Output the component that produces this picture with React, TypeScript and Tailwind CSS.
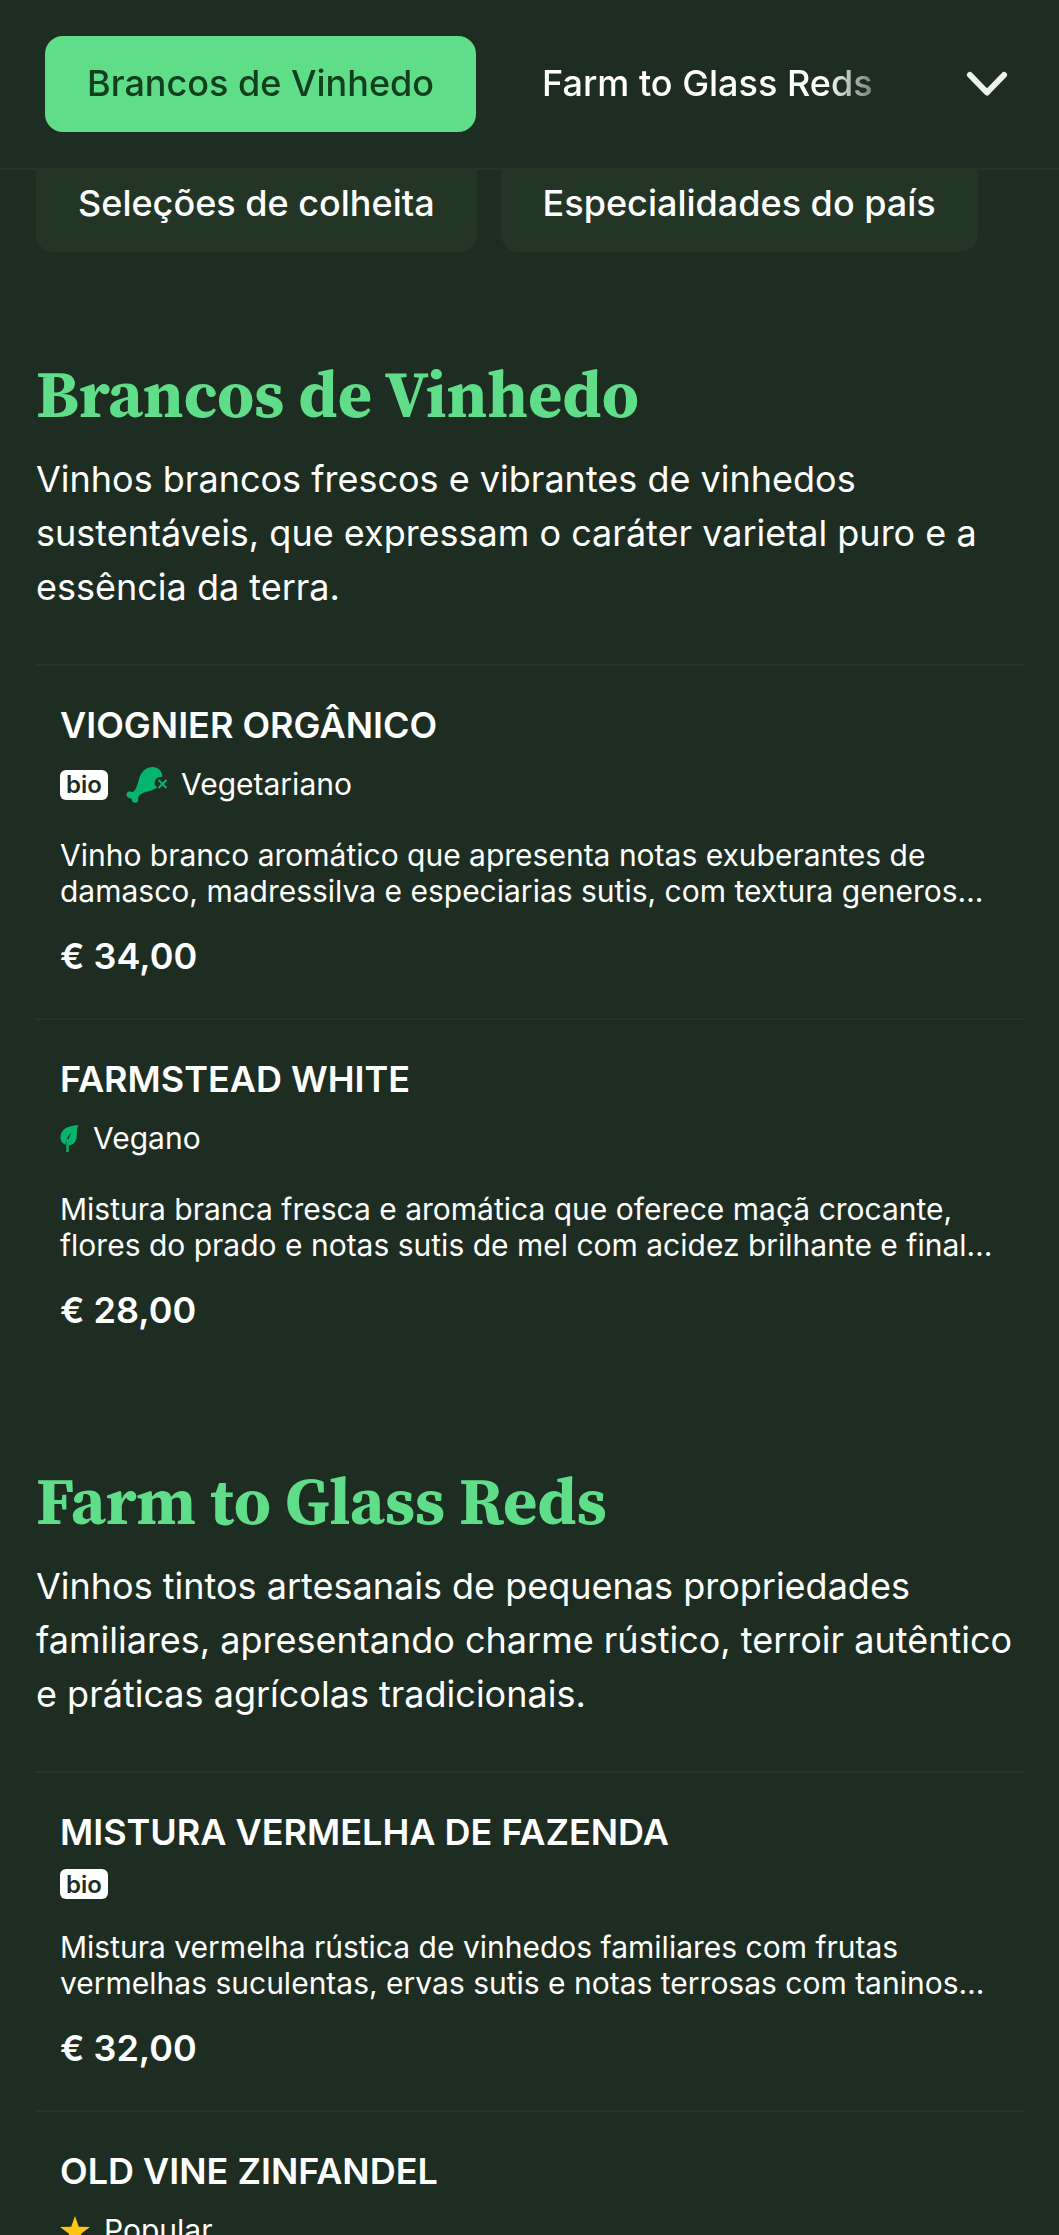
import type { ReactNode } from 'react';

interface Tag {
  kind: 'bio' | 'vegetarian' | 'vegan' | 'popular';
  label?: string;
}

interface Wine {
  name: string;
  tags: Tag[];
  description: string;
  price: string;
}

interface Category {
  id: string;
  title: string;
  description: string;
  wines: Wine[];
}

const categories: Category[] = [
  {
    id: 'brancos-de-vinhedo',
    title: 'Brancos de Vinhedo',
    description:
      'Vinhos brancos frescos e vibrantes de vinhedos sustentáveis, que expressam o caráter varietal puro e a essência da terra.',
    wines: [
      {
        name: 'VIOGNIER ORGÂNICO',
        tags: [{ kind: 'bio' }, { kind: 'vegetarian', label: 'Vegetariano' }],
        description:
          'Vinho branco aromático que apresenta notas exuberantes de damasco, madressilva e especiarias sutis, com textura generos…',
        price: '€ 34,00',
      },
      {
        name: 'FARMSTEAD WHITE',
        tags: [{ kind: 'vegan', label: 'Vegano' }],
        description:
          'Mistura branca fresca e aromática que oferece maçã crocante, flores do prado e notas sutis de mel com acidez brilhante e final…',
        price: '€ 28,00',
      },
    ],
  },
  {
    id: 'farm-to-glass-reds',
    title: 'Farm to Glass Reds',
    description:
      'Vinhos tintos artesanais de pequenas propriedades familiares, apresentando charme rústico, terroir autêntico e práticas agrícolas tradicionais.',
    wines: [
      {
        name: 'MISTURA VERMELHA DE FAZENDA',
        tags: [{ kind: 'bio' }],
        description:
          'Mistura vermelha rústica de vinhedos familiares com frutas vermelhas suculentas, ervas sutis e notas terrosas com taninos…',
        price: '€ 32,00',
      },
      {
        name: 'OLD VINE ZINFANDEL',
        tags: [{ kind: 'popular', label: 'Popular' }],
        description: '',
        price: '',
      },
    ],
  },
];

function DrumstickIcon() {
  return (
    <svg width="41" height="36" viewBox="0 0 41 36" fill="none" aria-hidden="true">
      <path
        d="M26.500 0C21 0 16 4 13.800 9.500C12.500 13 12 17 10.300 20.500C9.200 23 8.200 24.800 6.600 25C5 25 4 23.800 2.300 24.800C0 26.200 0 29.300 2 30.600C3.500 31.500 5 31 5.500 32C6 33.500 6 35 8 35.600C10.500 36.500 12.500 34.800 12.200 32.400C12 30.500 12.500 29 14.800 27.300C18 25 23 24.500 26.500 23C28.500 22.200 30.300 21.400 31.300 20.300C28.300 18.500 27.800 15 30 12.300C31.700 10.300 34 9.700 36.500 9.900C36 3.800 32 0 26.500 0Z"
        fill="#05b56d"
      />
      <path d="M32.500 13L40.500 21M40.500 13L32.500 21" stroke="#05b56d" strokeWidth="2" />
    </svg>
  );
}

function LeafIcon() {
  return (
    <svg width="19" height="27" viewBox="0 0 19 27" fill="none" aria-hidden="true">
      <path
        d="M18.500 0C14 0.500 8 1 4 4.500C0 8 -0.500 13 2 17.500L5.500 20C6 15 8 10.500 11.500 7.500C9 12 7.500 16 7.500 20.500C12 20.500 15.500 18 16.500 13.500C17.300 9 16 5 18.500 0Z"
        fill="#05b56d"
      />
      <path d="M7.500 14V27" stroke="#05b56d" strokeWidth="2.400" />
    </svg>
  );
}

function StarIcon() {
  return (
    <svg width="30" height="29" viewBox="0 0 30 29" aria-hidden="true">
      <path
        d="M15 0L18.800 10.800L30 11L21 17.800L24.300 28.700L15 22.200L5.700 28.700L9 17.800L0 11L11.200 10.800Z"
        fill="#ffc414"
      />
    </svg>
  );
}

function BioBadge() {
  return (
    <span className="flex h-[30px] w-12 items-center justify-center rounded-md bg-white pt-px text-2xl leading-none font-semibold text-[#1e2d21]">
      bio
    </span>
  );
}

const tagIcons: Record<Tag['kind'], ReactNode> = {
  bio: <BioBadge />,
  vegetarian: <DrumstickIcon />,
  vegan: <LeafIcon />,
  popular: <StarIcon />,
};

function WineItem({ wine }: { wine: Wine }) {
  return (
    <li className="border-t-2 border-[#243528] px-6 pt-[35px] pb-[38px]">
      <h3 className="text-4xl leading-[48px] font-semibold">{wine.name}</h3>
      <ul className="mt-[13px] flex items-center gap-[18px]">
        {wine.tags.map((tag) => (
          <li key={tag.kind} className="flex items-center gap-[14px]">
            {tagIcons[tag.kind]}
            {tag.label && <span className="text-3xl leading-[45px]">{tag.label}</span>}
          </li>
        ))}
      </ul>
      {wine.description && <p className="mt-[30px] text-3xl leading-9">{wine.description}</p>}
      {wine.price && <p className="mt-[23px] text-4xl leading-[48px] font-semibold">{wine.price}</p>}
    </li>
  );
}

function CategorySection({ category }: { category: Category }) {
  return (
    <section id={category.id}>
      <h2 className="font-['Source_Serif_4','Liberation_Serif',serif] text-[66px] leading-[78px] font-bold text-[#5fdd89]">
        {category.title}
      </h2>
      <p className="mt-[19px] mb-[50px] text-4xl leading-[54px]">{category.description}</p>
      <ul>
        {category.wines.map((wine) => (
          <WineItem key={wine.name} wine={wine} />
        ))}
      </ul>
    </section>
  );
}

export default function App() {
  return (
    <div className="h-screen overflow-hidden bg-[#1e2d21] font-['Inter',sans-serif] text-white">
      {/* Sticky category bar */}
      <header className="sticky top-0 z-10 flex items-start border-b-2 border-[#243528] bg-[#1e2d21] pt-9 pr-9 pb-9 pl-[45px]">
        <nav className="flex min-w-0 flex-1 gap-6 overflow-hidden [mask-image:linear-gradient(to_right,black_780px,transparent_860px)]">
          <a
            href="#brancos-de-vinhedo"
            className="shrink-0 rounded-[18px] bg-[#5fdd89] px-[42px] pt-[23px] pb-[25px] text-4xl leading-[48px] font-medium text-[#12401f]"
          >
            Brancos de Vinhedo
          </a>
          <a
            href="#farm-to-glass-reds"
            className="shrink-0 rounded-[18px] px-[42px] pt-[23px] pb-[25px] text-4xl leading-[48px] font-medium"
          >
            Farm to Glass Reds
          </a>
        </nav>
        <button type="button" aria-label="Mostrar categorias" className="flex h-24 w-[72px] items-center justify-center">
          <svg width="42" height="26" viewBox="0 0 42 26" fill="none" aria-hidden="true">
            <path d="M4 4L21 21.500L38 4" stroke="#edf3ed" strokeWidth="6" strokeLinecap="round" strokeLinejoin="round" />
          </svg>
        </button>
      </header>

      {/* Chips scrolled partly under the bar */}
      <div className="-mt-[14px] flex gap-6 px-9">
        <a href="#selecoes" className="rounded-[18px] bg-[#233626] px-[42px] pt-[23px] pb-[25px] text-4xl leading-[48px] font-medium">
          Seleções de colheita
        </a>
        <a href="#especialidades" className="rounded-[18px] bg-[#233626] px-[42px] pt-[23px] pb-[25px] text-4xl leading-[48px] font-medium">
          Especialidades do país
        </a>
      </div>

      <main className="mt-[103px] flex flex-col gap-[90px] pr-[34px] pl-9">
        {categories.map((category) => (
          <CategorySection key={category.id} category={category} />
        ))}
      </main>
    </div>
  );
}
